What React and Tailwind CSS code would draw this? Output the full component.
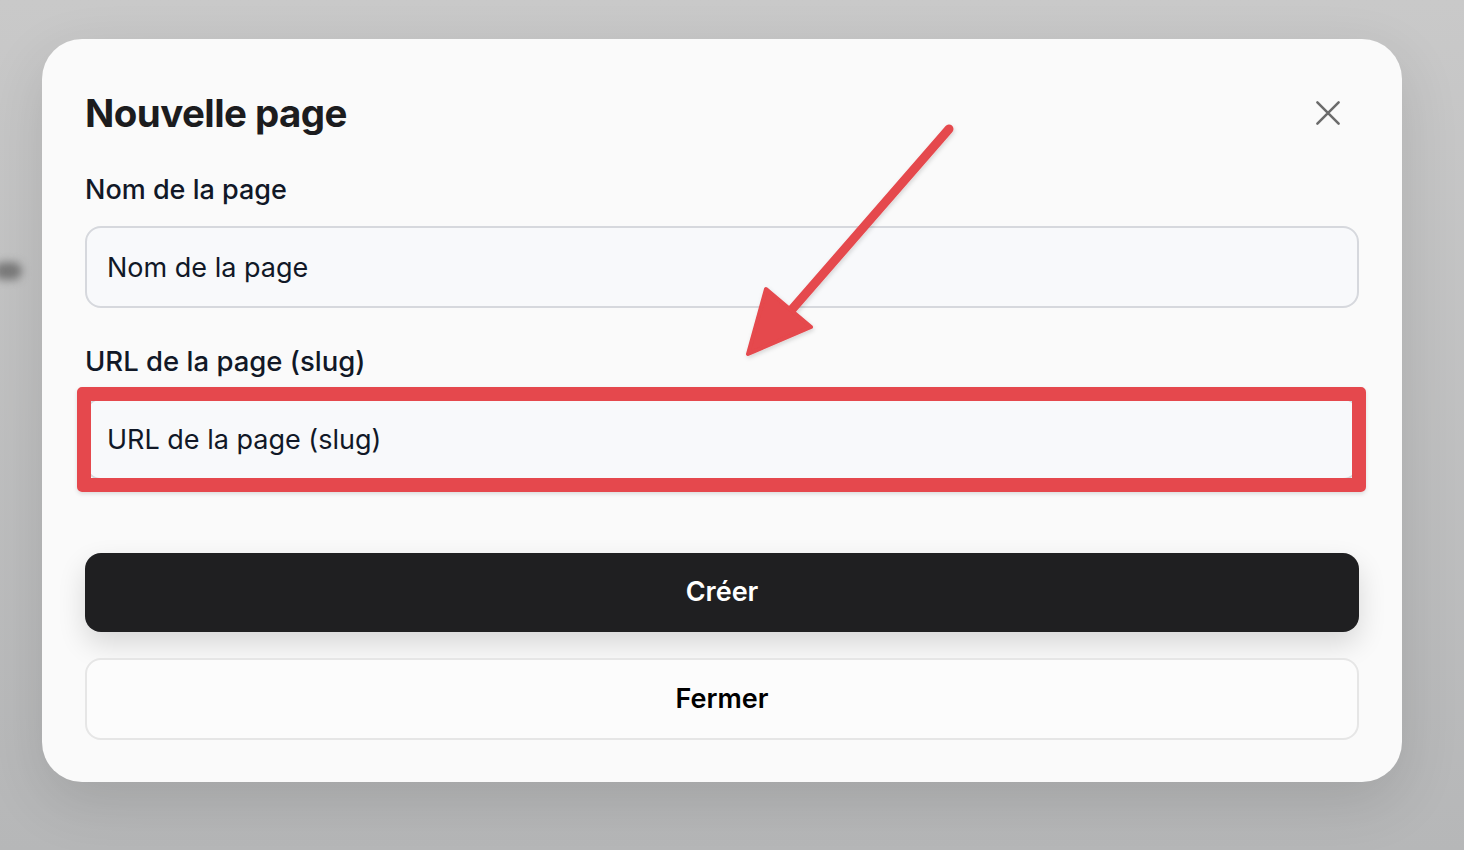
import React from "react";

const Arrow = () => (
  <svg
    className="absolute left-0 top-0 pointer-events-none"
    width="1464"
    height="850"
    viewBox="0 0 1464 850"
  >
    <defs>
      <filter id="arrowShadow" x="-20%" y="-20%" width="140%" height="140%">
        <feDropShadow dx="1" dy="2" stdDeviation="2" floodColor="#000" floodOpacity="0.15" />
      </filter>
    </defs>
    <g filter="url(#arrowShadow)" fill="#e5484d" stroke="#e5484d" strokeLinejoin="round" strokeLinecap="round">
      <line x1="949" y1="129" x2="788" y2="314" strokeWidth="9" />
      <polygon points="766,289 748,354 811,327" strokeWidth="4" />
    </g>
  </svg>
);

const App = () => {
  return (
    <div
      className="relative w-full h-[850px] overflow-hidden bg-gradient-to-b from-[#c9c9c9] to-[#b6b7b8] pt-[39px] pl-[42px]"
      style={{ fontFamily: "Inter, 'Noto Sans', sans-serif" }}
    >
      {/* blurred background bits */}
      <div className="absolute left-[-6px] top-[262px] w-[28px] h-[18px] rounded-full bg-[#7a7a7a] blur-[4px]" />

      <div className="relative w-[1360px] h-[743px] rounded-[40px] bg-[#fafafa] px-[43px] pt-[50px] shadow-[0_20px_60px_rgba(0,0,0,0.12)]">
        {/* Header */}
        <div className="flex items-center justify-between h-[48px]">
          <h1 className="text-[38.5px] font-bold text-[#1c1c1e] tracking-[-0.015em] leading-none">
            Nouvelle page
          </h1>
          <button className="mr-[14px] text-[#6b6b6b]">
            <svg width="34" height="34" viewBox="0 0 24 24" fill="none" stroke="currentColor" strokeWidth="1.8" strokeLinecap="round">
              <path d="M4.5 4.5l15 15M19.5 4.5l-15 15" />
            </svg>
          </button>
        </div>

        {/* Nom */}
        <label className="block mt-[37px] h-[32px] leading-[32px] text-[27px] font-medium text-[#111827]">
          Nom de la page
        </label>
        <input
          type="text"
          placeholder="Nom de la page"
          className="mt-[20px] block w-full h-[82px] rounded-[16px] border-2 border-[#d6d8dd] bg-[#f8f9fb] px-[20px] text-[27px] text-[#111827] placeholder:text-[#111827] outline-none"
        />

        {/* Slug */}
        <label className="block mt-[37px] h-[32px] leading-[32px] text-[27.5px] font-medium text-[#111827]">
          URL de la page (slug)
        </label>
        <div className="relative mt-[21px]">
          <input
            type="text"
            placeholder="URL de la page (slug)"
            className="block w-full h-[82px] rounded-[16px] border-2 border-[#d6d8dd] bg-[#f8f9fb] px-[20px] text-[27px] text-[#111827] placeholder:text-[#111827] outline-none"
          />
          <div className="absolute left-[-8px] right-[-7px] top-[-11px] bottom-[-12px] border-[14px] border-[#e5484d] rounded-[5px] pointer-events-none shadow-[0_2px_4px_rgba(0,0,0,0.12)]" />
        </div>

        {/* Buttons */}
        <button className="mt-[73px] block w-full h-[79px] rounded-[16px] bg-[#1f1f21] text-white text-[27px] font-semibold shadow-[0_12px_28px_rgba(0,0,0,0.14)]">
          Créer
        </button>
        <button className="mt-[26px] block w-full h-[82px] rounded-[16px] border-2 border-[#e6e6e6] bg-[#fcfcfc] text-black text-[27px] font-semibold">
          Fermer
        </button>
      </div>

      <Arrow />
    </div>
  );
};

export default App;
